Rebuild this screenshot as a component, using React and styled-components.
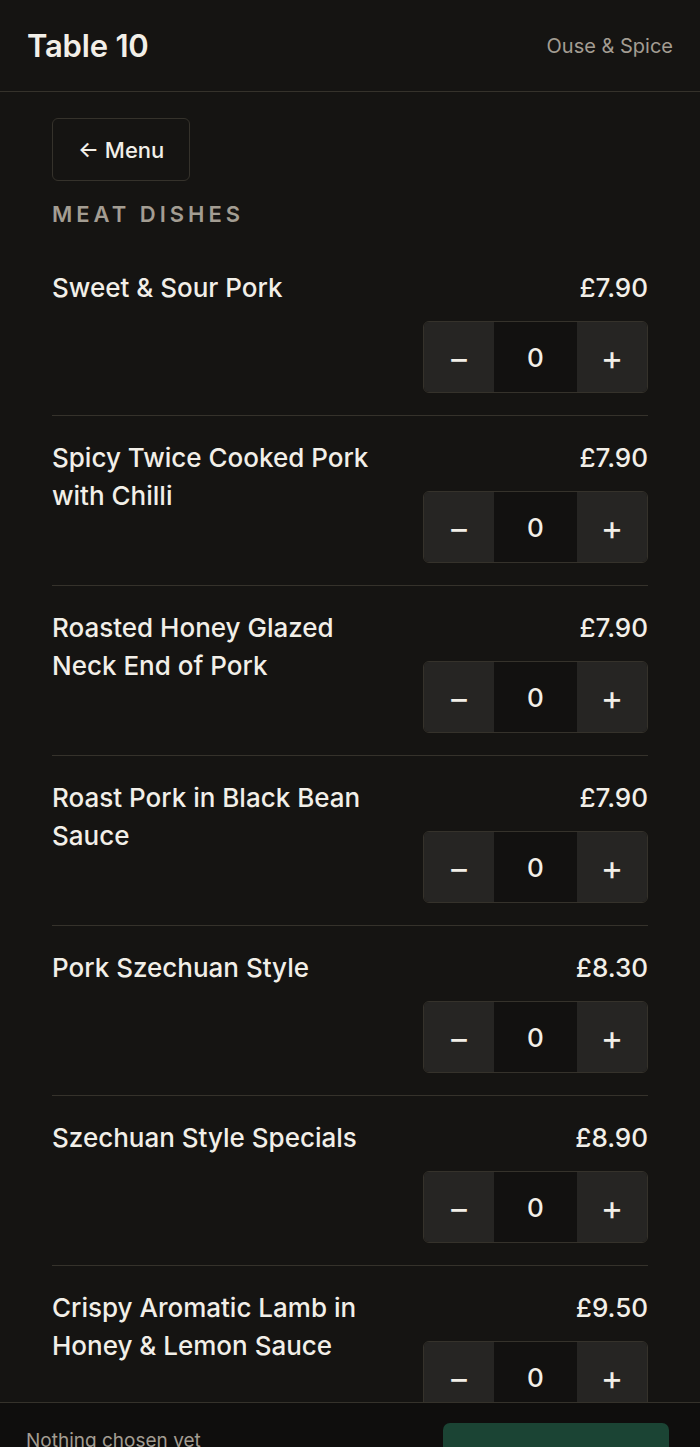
import React, { useState } from 'react'
import styled, { createGlobalStyle } from 'styled-components'

const BG = '#151412'
const FOOT = '#0f0e0d'
const LINE = '#35322b'
const TEXT = '#f2efe8'
const MUTED = '#a39d92'

const GlobalStyle = createGlobalStyle`
    html, body {
        margin: 0;
        padding: 0;
        background: ${BG};
        overflow: hidden;
    }
    * { box-sizing: border-box; }
    body {
        font-family: Inter, "Noto Sans", "Liberation Sans", sans-serif;
        color: ${TEXT};
    }
`

const dishes = [
    { name: 'Sweet & Sour Pork', price: 7.9 },
    { name: 'Spicy Twice Cooked Pork with Chilli', price: 7.9 },
    { name: 'Roasted Honey Glazed Neck End of Pork', price: 7.9 },
    { name: 'Roast Pork in Black Bean Sauce', price: 7.9 },
    { name: 'Pork Szechuan Style', price: 8.3 },
    { name: 'Szechuan Style Specials', price: 8.9 },
    { name: 'Crispy Aromatic Lamb in Honey & Lemon Sauce', price: 9.5 },
    { name: 'Lamb Szechuan Style', price: 9.5 },
]

const App = () => {
    const [counts, setCounts] = useState(dishes.map(() => 0))
    const change = (i, d) => {
        setCounts(c => c.map((v, j) => (j === i ? Math.max(0, v + d) : v)))
    }
    const total = counts.reduce((a, b) => a + b, 0)

    return (
        <Shell>
            <GlobalStyle />
            <Header>
                <TableName>Table 10</TableName>
                <Brand>Ouse &amp; Spice</Brand>
            </Header>
            <Main>
                <BackButton>← Menu</BackButton>
                <SectionTitle>Meat Dishes</SectionTitle>
                <List>
                    {dishes.map((dish, i) => (
                        <Row key={dish.name}>
                            <DishName>{dish.name}</DishName>
                            <Side>
                                <Price>£{dish.price.toFixed(2)}</Price>
                                <Stepper>
                                    <StepButton onClick={() => change(i, -1)}>−</StepButton>
                                    <Count>{counts[i]}</Count>
                                    <StepButton onClick={() => change(i, 1)}>+</StepButton>
                                </Stepper>
                            </Side>
                        </Row>
                    ))}
                </List>
            </Main>
            <Footer>
                <Summary>{total ? `${total} item${total > 1 ? 's' : ''} chosen` : 'Nothing chosen yet'}</Summary>
                <OrderButton>Review order</OrderButton>
            </Footer>
        </Shell>
    )
}

const Shell = styled.div`
    height: calc(100vh + 80px);
    display: flex;
    flex-direction: column;
    background: ${BG};
`
const Header = styled.header`
    flex: 0 0 92px;
    display: flex;
    align-items: center;
    justify-content: space-between;
    padding: 0 27px;
    border-bottom: 1px solid ${LINE};
`
const TableName = styled.h1`
    margin: 0;
    font-size: 31px;
    font-weight: 600;
    letter-spacing: -0.2px;
    color: ${TEXT};
`
const Brand = styled.span`
    font-size: 20px;
    color: ${MUTED};
`
const Main = styled.main`
    flex: 1;
    min-height: 0;
    overflow: hidden;
    padding: 26px 52px 0;
`
const BackButton = styled.button`
    display: block;
    height: 63px;
    padding: 0 25px;
    background: transparent;
    border: 1px solid ${LINE};
    border-radius: 6px;
    color: ${TEXT};
    font-family: inherit;
    font-size: 22px;
    font-weight: 500;
    cursor: pointer;
`
const SectionTitle = styled.h2`
    margin: 18px 0 17px;
    font-size: 22px;
    line-height: 30px;
    font-weight: 600;
    letter-spacing: 4px;
    text-transform: uppercase;
    color: ${MUTED};
`
const List = styled.div`
    display: flex;
    flex-direction: column;
`
const Row = styled.div`
    display: flex;
    justify-content: space-between;
    gap: 28px;
    padding: 23px 0 22px;
    border-bottom: 1px solid ${LINE};
`
const DishName = styled.div`
    flex: 1;
    font-size: 26px;
    line-height: 38px;
    font-weight: 500;
`
const Side = styled.div`
    display: flex;
    flex-direction: column;
    align-items: flex-end;
    gap: 14px;
`
const Price = styled.div`
    font-size: 26px;
    line-height: 38px;
    font-weight: 500;
`
const Stepper = styled.div`
    display: grid;
    grid-template-columns: 70px 83px 70px;
    height: 72px;
    border: 1px solid ${LINE};
    border-radius: 6px;
    overflow: hidden;
`
const StepButton = styled.button`
    border: none;
    background: #262523;
    color: ${TEXT};
    font-family: inherit;
    font-size: 34px;
    font-weight: 400;
    cursor: pointer;
`
const Count = styled.div`
    display: flex;
    align-items: center;
    justify-content: center;
    background: #121110;
    font-size: 26px;
    font-weight: 500;
`
const Footer = styled.footer`
    flex: 0 0 125px;
    display: flex;
    justify-content: space-between;
    align-items: flex-start;
    padding: 20px 31px 20px 26px;
    background: ${FOOT};
    border-top: 1px solid ${LINE};
`
const Summary = styled.span`
    margin-top: 6px;
    font-size: 19px;
    color: ${MUTED};
`
const OrderButton = styled.button`
    width: 226px;
    height: 84px;
    border: none;
    border-radius: 7px;
    background: #1b4434;
    color: ${TEXT};
    font-family: inherit;
    font-size: 21px;
    font-weight: 600;
`

export default App
